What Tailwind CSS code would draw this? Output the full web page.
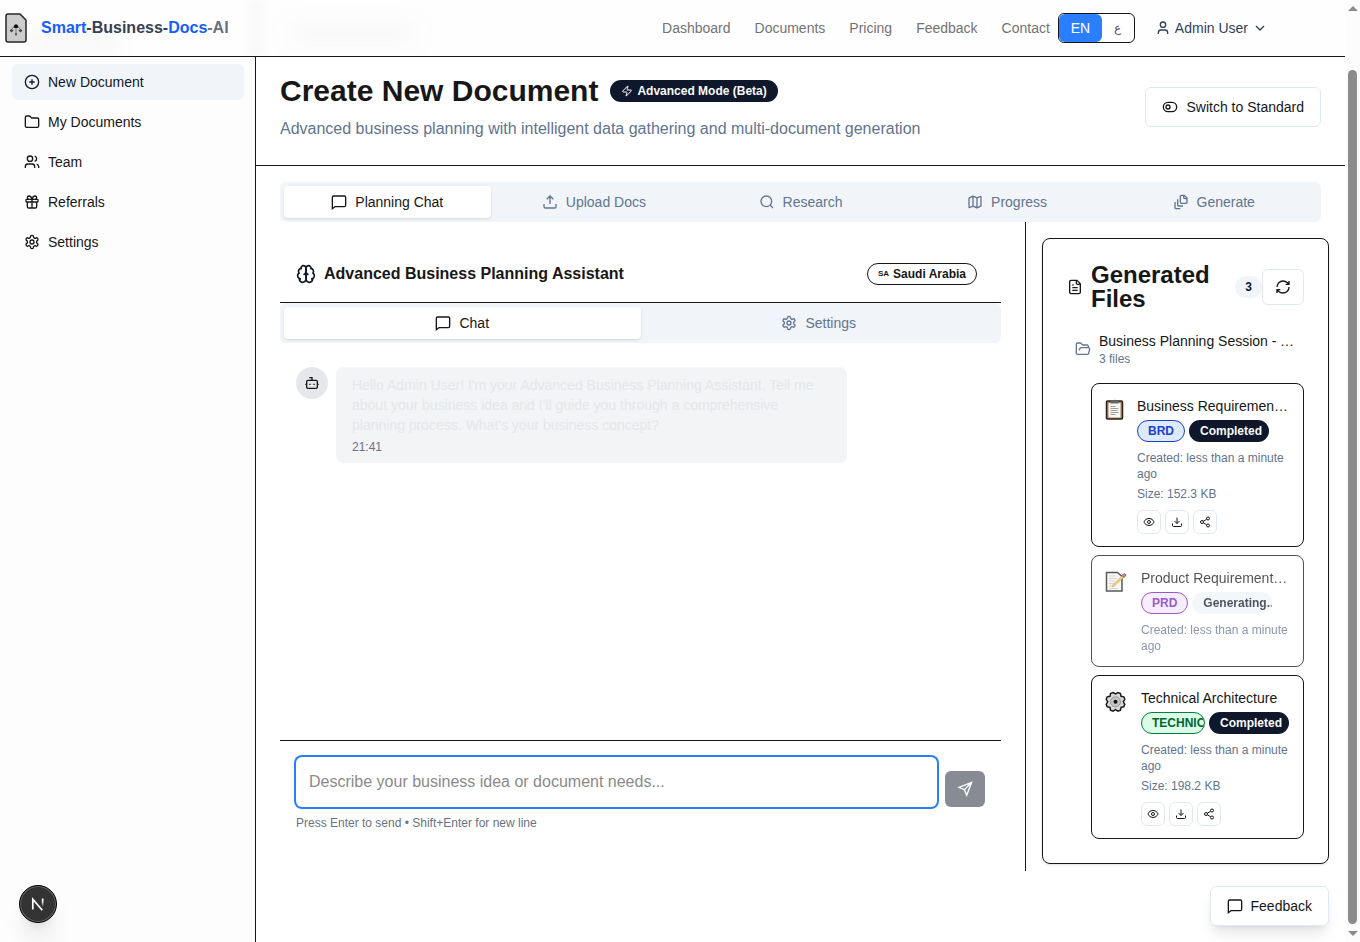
<!DOCTYPE html>
<html lang="en">
<head>
<meta charset="utf-8">
<meta name="viewport" content="width=device-width, initial-scale=1">
<title>Smart-Business-Docs-AI</title>
<script src="https://cdn.jsdelivr.net/npm/@tailwindcss/browser@4"></script>
</head>
<body class="flex h-screen overflow-hidden bg-white font-['Liberation_Sans',Arial,sans-serif] text-sm text-neutral-900">

<svg class="hidden" aria-hidden="true">
  <symbol id="plus" viewBox="0 0 24 24"><circle cx="12" cy="12" r="10"/><path d="M8 12h8M12 8v8"/></symbol>
  <symbol id="folder" viewBox="0 0 24 24"><path d="M20 20a2 2 0 0 0 2-2V8a2 2 0 0 0-2-2h-7.9a2 2 0 0 1-1.69-.9L9.6 3.9A2 2 0 0 0 7.93 3H4a2 2 0 0 0-2 2v13a2 2 0 0 0 2 2Z"/></symbol>
  <symbol id="folder-open" viewBox="0 0 24 24"><path d="m6 14 1.5-2.9A2 2 0 0 1 9.24 10H20a2 2 0 0 1 1.94 2.5l-1.54 6a2 2 0 0 1-1.95 1.5H4a2 2 0 0 1-2-2V5a2 2 0 0 1 2-2h3.9a2 2 0 0 1 1.69.9l.81 1.2a2 2 0 0 0 1.67.9H18a2 2 0 0 1 2 2v2"/></symbol>
  <symbol id="users" viewBox="0 0 24 24"><path d="M16 21v-2a4 4 0 0 0-4-4H6a4 4 0 0 0-4 4v2"/><circle cx="9" cy="7" r="4"/><path d="M22 21v-2a4 4 0 0 0-3-3.870M16 3.130a4 4 0 0 1 0 7.750"/></symbol>
  <symbol id="gift" viewBox="0 0 24 24"><rect x="3" y="8" width="18" height="4" rx="1"/><path d="M12 8v13M19 12v7a2 2 0 0 1-2 2H7a2 2 0 0 1-2-2v-7M7.5 8a2.5 2.5 0 0 1 0-5A4.8 8 0 0 1 12 8a4.8 8 0 0 1 4.500-5 2.500 2.500 0 0 1 0 5"/></symbol>
  <symbol id="gear" viewBox="0 0 24 24"><path d="M12.220 2h-.44a2 2 0 0 0-2 2v.18a2 2 0 0 1-1 1.730l-.43.25a2 2 0 0 1-2 0l-.15-.08a2 2 0 0 0-2.730.73l-.22.38a2 2 0 0 0 .73 2.730l.15.1a2 2 0 0 1 1 1.720v.51a2 2 0 0 1-1 1.740l-.15.09a2 2 0 0 0-.73 2.730l.22.38a2 2 0 0 0 2.730.73l.15-.08a2 2 0 0 1 2 0l.43.25a2 2 0 0 1 1 1.730V20a2 2 0 0 0 2 2h.44a2 2 0 0 0 2-2v-.18a2 2 0 0 1 1-1.730l.43-.25a2 2 0 0 1 2 0l.15.08a2 2 0 0 0 2.730-.73l.22-.39a2 2 0 0 0-.73-2.730l-.15-.08a2 2 0 0 1-1-1.740v-.5a2 2 0 0 1 1-1.740l.15-.09a2 2 0 0 0 .73-2.730l-.22-.38a2 2 0 0 0-2.730-.73l-.15.08a2 2 0 0 1-2 0l-.43-.25a2 2 0 0 1-1-1.730V4a2 2 0 0 0-2-2z"/><circle cx="12" cy="12" r="3"/></symbol>
  <symbol id="user" viewBox="0 0 24 24"><path d="M19 21v-2a4 4 0 0 0-4-4H9a4 4 0 0 0-4 4v2"/><circle cx="12" cy="7" r="4"/></symbol>
  <symbol id="chevron" viewBox="0 0 24 24"><path d="m6 9 6 6 6-6"/></symbol>
  <symbol id="zap" viewBox="0 0 24 24"><path d="M4 14a1 1 0 0 1-.78-1.630l9.900-10.200a.5.5 0 0 1 .86.46l-1.920 6.020A1 1 0 0 0 13 10h7a1 1 0 0 1 .78 1.630l-9.900 10.200a.5.5 0 0 1-.86-.46l1.920-6.020A1 1 0 0 0 11 14z"/></symbol>
  <symbol id="toggle" viewBox="0 0 24 24"><rect x="2" y="5" width="20" height="14" rx="7"/><circle cx="9" cy="12" r="3"/></symbol>
  <symbol id="bubble" viewBox="0 0 24 24"><path d="M22 17a2 2 0 0 1-2 2H6l-4 3V5a2 2 0 0 1 2-2h16a2 2 0 0 1 2 2z"/></symbol>
  <symbol id="upload" viewBox="0 0 24 24"><path d="M12 3v12M7 8l5-5 5 5M21 15v4a2 2 0 0 1-2 2H5a2 2 0 0 1-2-2v-4"/></symbol>
  <symbol id="download" viewBox="0 0 24 24"><path d="M12 3v12M7 10l5 5 5-5M21 15v4a2 2 0 0 1-2 2H5a2 2 0 0 1-2-2v-4"/></symbol>
  <symbol id="search" viewBox="0 0 24 24"><circle cx="11" cy="11" r="8"/><path d="m21 21-4.340-4.340"/></symbol>
  <symbol id="map" viewBox="0 0 24 24"><path d="M14.106 5.553a2 2 0 0 0 1.788 0l3.659-1.830A1 1 0 0 1 21 4.619v12.764a1 1 0 0 1-.553.894l-4.553 2.277a2 2 0 0 1-1.788 0l-4.212-2.106a2 2 0 0 0-1.788 0l-3.659 1.830A1 1 0 0 1 3 19.381V6.618a1 1 0 0 1 .553-.894l4.553-2.277a2 2 0 0 1 1.788 0zM15 5.764v15M9 3.236v15"/></symbol>
  <symbol id="files" viewBox="0 0 24 24"><path d="M21 7h-3a2 2 0 0 1-2-2V2M21 6v6.500c0 .8-.7 1.500-1.500 1.500h-7c-.8 0-1.500-.7-1.500-1.500v-9c0-.8.7-1.500 1.500-1.500H17ZM7 8v8.800c0 .3.2.6.4.8.2.2.5.4.8.4H15M3 12v8.800c0 .3.2.6.4.8.2.2.5.4.8.4H11"/></symbol>
  <symbol id="brain" viewBox="0 0 24 24"><path d="M12 5a3 3 0 1 0-5.997.125 4 4 0 0 0-2.526 5.770 4 4 0 0 0 .556 6.588A4 4 0 1 0 12 18Z"/><path d="M12 5a3 3 0 1 1 5.997.125 4 4 0 0 1 2.526 5.770 4 4 0 0 1-.556 6.588A4 4 0 1 1 12 18Z"/><path d="M15 13a4.500 4.500 0 0 1-3-4 4.500 4.500 0 0 1-3 4M17.599 6.500a3 3 0 0 0 .399-1.375M6.003 5.125A3 3 0 0 0 6.401 6.500M3.477 10.896a4 4 0 0 1 .585-.396M19.938 10.500a4 4 0 0 1 .585.396M6 18a4 4 0 0 1-1.967-.516M19.967 17.484A4 4 0 0 1 18 18"/></symbol>
  <symbol id="bot" viewBox="0 0 24 24"><path d="M12 8V4H8"/><rect x="4" y="8" width="16" height="12" rx="2"/><path d="M2 14h2M20 14h2M15 13v2M9 13v2"/></symbol>
  <symbol id="send" viewBox="0 0 24 24"><path d="M3 9.500 22 2l-7.500 19.500-3.500-8.500zM22 2 11 13"/></symbol>
  <symbol id="file" viewBox="0 0 24 24"><path d="M15 2H6a2 2 0 0 0-2 2v16a2 2 0 0 0 2 2h12a2 2 0 0 0 2-2V7zM14 2v4a2 2 0 0 0 2 2h4M10 9H8M16 13H8M16 17H8"/></symbol>
  <symbol id="refresh" viewBox="0 0 24 24"><path d="M3 12a9 9 0 0 1 9-9 9.750 9.750 0 0 1 6.740 2.740L21 8M21 3v5h-5M21 12a9 9 0 0 1-9 9 9.750 9.750 0 0 1-6.740-2.740L3 16M8 16H3v5"/></symbol>
  <symbol id="eye" viewBox="0 0 24 24"><path d="M2 12.300a1 1 0 0 1 0-.7 10.750 10.750 0 0 1 20 0 1 1 0 0 1 0 .7 10.750 10.750 0 0 1-20 0"/><circle cx="12" cy="12" r="3"/></symbol>
  <symbol id="share" viewBox="0 0 24 24"><circle cx="18" cy="5" r="3"/><circle cx="6" cy="12" r="3"/><circle cx="18" cy="19" r="3"/><path d="m8.600 13.500 6.800 4M15.400 6.500l-6.800 4"/></symbol>
</svg>

<div class="relative flex min-w-0 flex-1 flex-col">
  <header class="relative flex shrink-0 items-center border-b border-neutral-900 bg-[#fefefe] pr-[77px] pl-1">
    <div class="absolute inset-0 overflow-hidden" aria-hidden="true">
      <div class="absolute top-9 left-6 h-4 w-24 bg-black/4 blur-md"></div>
      <div class="absolute top-7 left-72 h-3 w-32 bg-slate-500/8 blur-md"></div>
      <div class="absolute top-0 left-62 h-14 w-4 bg-black/2 blur-xs"></div>
    </div>
    <a href="#" class="relative flex items-center gap-[13px] text-base font-bold">
      <svg class="h-8 w-6" viewBox="0 0 24 32" aria-hidden="true">
        <path d="M4 2h12l6 6v20a2 2 0 0 1-2 2H4a2 2 0 0 1-2-2V4a2 2 0 0 1 2-2z" fill="#cdcdcd" stroke="#262626" stroke-width="1.500"/>
        <path d="M12 14v9M7.500 19c0-3 2-4 4.500-4s4.500 1 4.500 4" fill="none" stroke="#777"/>
        <path d="m12 12 2.500 2-1 2h-3l-1-2z" fill="#111"/><path d="m5.500 18.500 2-1.500 2 1.500-2 2zM14.500 18.500l2-1.500 2 1.500-2 2zM10.500 21.500h3L12 24z" fill="#444"/>
      </svg>
      <span><span class="text-blue-600">Smart</span><span class="text-gray-700">-Business-</span><span class="text-blue-600">Docs</span><span class="text-gray-500">-AI</span></span>
    </a>
    <nav class="relative ml-auto flex gap-6 text-neutral-500">
      <a href="#">Dashboard</a><a href="#">Documents</a><a href="#">Pricing</a><a href="#">Feedback</a><a href="#">Contact</a>
    </nav>
    <div class="relative my-[13px] ml-2 flex h-[30px] overflow-hidden rounded-md border border-neutral-900 bg-white">
      <button class="w-[43px] rounded-md bg-[#2b7fff] font-medium text-white">EN</button>
      <button class="w-8 text-xs text-gray-600" aria-label="Arabic">ع</button>
    </div>
    <button class="relative ml-5 flex items-center gap-1 text-slate-700">
      <svg class="size-4 fill-none stroke-current stroke-2"><use href="#user"/></svg>Admin User<svg class="size-4 fill-none stroke-current stroke-2"><use href="#chevron"/></svg>
    </button>
  </header>

  <div class="flex min-h-0 flex-1">
    <aside class="w-64 shrink-0 border-r border-neutral-900 bg-[#fdfdfd] py-[7px] pr-[11px] pl-3">
      <nav class="flex flex-col gap-1">
        <a href="#" class="flex h-9 items-center gap-2 rounded-md bg-slate-100 px-3 text-slate-900"><svg class="size-4 fill-none stroke-current stroke-2"><use href="#plus"/></svg>New Document</a>
        <a href="#" class="flex h-9 items-center gap-2 px-3"><svg class="size-4 fill-none stroke-current stroke-2"><use href="#folder"/></svg>My Documents</a>
        <a href="#" class="flex h-9 items-center gap-2 px-3"><svg class="size-4 fill-none stroke-current stroke-2"><use href="#users"/></svg>Team</a>
        <a href="#" class="flex h-9 items-center gap-2 px-3"><svg class="size-4 fill-none stroke-current stroke-2"><use href="#gift"/></svg>Referrals</a>
        <a href="#" class="flex h-9 items-center gap-2 px-3"><svg class="size-4 fill-none stroke-current stroke-2"><use href="#gear"/></svg>Settings</a>
      </nav>
    </aside>

    <main class="flex min-w-0 flex-1 flex-col">
      <div class="flex items-center justify-between border-b border-neutral-900 pt-4 pr-6 pb-6 pl-6">
        <div>
          <div class="flex items-center gap-3">
            <h1 class="text-3xl font-bold">Create New Document</h1>
            <span class="flex items-center gap-1 rounded-full bg-slate-900 px-[11px] py-[3px] text-xs font-semibold text-slate-50"><svg class="size-3 fill-none stroke-current stroke-2"><use href="#zap"/></svg>Advanced Mode (Beta)</span>
          </div>
          <p class="mt-2 text-base text-slate-500">Advanced business planning with intelligent data gathering and multi-document generation</p>
        </div>
        <button class="flex h-10 items-center gap-2 rounded-md border border-slate-200 bg-white px-4"><svg class="size-4 fill-none stroke-current stroke-2"><use href="#toggle"/></svg>Switch to Standard</button>
      </div>

      <div class="mt-4 mr-6 ml-6 grid h-10 grid-cols-5 rounded-md bg-slate-100 p-1 text-slate-500" role="tablist">
        <button role="tab" aria-selected="true" class="flex items-center justify-center gap-2 rounded-sm bg-white text-neutral-900 shadow-sm"><svg class="size-4 fill-none stroke-current stroke-2"><use href="#bubble"/></svg>Planning Chat</button>
        <button role="tab" class="flex items-center justify-center gap-2"><svg class="size-4 fill-none stroke-current stroke-2"><use href="#upload"/></svg>Upload Docs</button>
        <button role="tab" class="flex items-center justify-center gap-2"><svg class="size-4 fill-none stroke-current stroke-2"><use href="#search"/></svg>Research</button>
        <button role="tab" class="flex items-center justify-center gap-2"><svg class="size-4 fill-none stroke-current stroke-2"><use href="#map"/></svg>Progress</button>
        <button role="tab" class="flex items-center justify-center gap-2"><svg class="size-4 fill-none stroke-current stroke-2"><use href="#files"/></svg>Generate</button>
      </div>

      <div class="flex">
        <section class="flex min-w-0 flex-1 flex-col px-6 pb-6">
          <div class="flex items-center justify-between border-b border-neutral-900 pt-10 pr-6 pb-4 pl-4">
            <h2 class="flex items-center gap-2 text-base font-semibold"><svg class="size-5 fill-none stroke-slate-900 stroke-2"><use href="#brain"/></svg>Advanced Business Planning Assistant</h2>
            <span class="flex h-[22px] items-center gap-1 rounded-full border border-neutral-900 px-2.5 text-xs font-semibold"><span class="text-[8px]">SA</span>Saudi Arabia</span>
          </div>
          <div class="grid h-10 grid-cols-2 rounded-md bg-slate-100 p-1 text-slate-500" role="tablist">
            <button role="tab" aria-selected="true" class="flex items-center justify-center gap-2 rounded-sm bg-white text-neutral-900 shadow-sm"><svg class="size-4 fill-none stroke-current stroke-2"><use href="#bubble"/></svg>Chat</button>
            <button role="tab" class="flex items-center justify-center gap-2"><svg class="size-4 fill-none stroke-current stroke-2"><use href="#gear"/></svg>Settings</button>
          </div>
          <div class="flex flex-1 items-start gap-2 px-4 pt-6">
            <span class="flex size-8 shrink-0 items-center justify-center rounded-full bg-gray-200"><svg class="size-4 fill-none stroke-current stroke-2"><use href="#bot"/></svg></span>
            <div class="max-w-[511px] rounded-lg bg-gray-100 px-4 py-2">
              <p class="text-gray-200">Hello Admin User! I'm your Advanced Business Planning Assistant. Tell me about your business idea and I'll guide you through a comprehensive planning process. What's your business concept?</p>
              <time class="mt-1 block text-xs text-gray-500">21:41</time>
            </div>
          </div>
          <div class="border-t border-neutral-900 p-4">
            <div class="flex items-end gap-2">
              <textarea rows="1" aria-label="Message" placeholder="Describe your business idea or document needs..." class="block h-[50px] min-w-0 flex-1 resize-none rounded-md bg-white px-[13px] pt-[13px] text-base ring-2 ring-[#2b7fff] outline-none placeholder:text-[#8a8a8a]"></textarea>
              <button aria-label="Send" class="flex h-9 w-10 items-center justify-center rounded-md bg-[#878b93] text-white"><svg class="size-4 fill-none stroke-current stroke-2"><use href="#send"/></svg></button>
            </div>
            <p class="mt-2 text-xs text-gray-500">Press Enter to send • Shift+Enter for new line</p>
          </div>
        </section>

        <aside class="w-80 shrink-0 border-l border-neutral-900 px-4 pt-4 pb-[7px]">
          <div class="rounded-lg border border-neutral-900 p-6 shadow-sm">
            <div class="flex items-center">
              <svg class="mr-2 size-4 shrink-0 fill-none stroke-current stroke-2"><use href="#file"/></svg>
              <h2 class="flex-1 text-2xl/6 font-semibold">Generated Files</h2>
              <span class="rounded-full bg-slate-100 px-2.5 py-[3px] text-xs font-semibold text-slate-900">3</span>
              <button aria-label="Refresh" class="flex h-9 w-[42px] items-center justify-center rounded-md border border-slate-200"><svg class="size-4 fill-none stroke-current stroke-2"><use href="#refresh"/></svg></button>
            </div>
            <div class="mt-3 flex items-center gap-2 p-2">
              <svg class="size-4 shrink-0 fill-none stroke-slate-500 stroke-2"><use href="#folder-open"/></svg>
              <div class="min-w-0"><p class="truncate">Business Planning Session - Today</p><p class="text-xs text-slate-500">3 files</p></div>
            </div>
            <div class="mt-2 ml-6 flex flex-col gap-2">
              <article class="flex gap-2 rounded-lg border border-neutral-900 p-3">
                <svg class="mt-0.5 h-6 w-[25px] shrink-0" viewBox="0 0 25 24" aria-hidden="true"><rect x="2.500" y="3" width="16" height="18" rx="1" fill="#b97f50" stroke="#27231f" stroke-width="1.500"/><path d="M4.500 5h12v14.500h-12z" fill="#f7f7f7"/><path d="M6.500 5.500V3h2.500l1.500-1.500L12 3h2.500v2.500z" fill="#666"/><path d="M6.500 8.500h5M6.500 10.500h8M6.500 12.500h7M6.500 14.500h8M6.500 16.500h5" stroke="#888" stroke-width=".8"/></svg>
                <div class="min-w-0 flex-1">
                  <h3 class="truncate">Business Requirements Document</h3>
                  <div class="mt-1 flex gap-1 text-xs font-semibold"><span class="rounded-full border border-[#1d40c8] bg-blue-100 px-2.5 py-0.5 text-[#1d40c8]">BRD</span><span class="w-20 overflow-hidden rounded-full bg-slate-900 py-[3px] pl-[11px] text-slate-50">Completed</span></div>
                  <p class="mt-2 text-xs text-slate-500">Created: less than a minute ago</p>
                  <p class="mt-1 text-xs text-slate-500">Size: 152.3 KB</p>
                  <div class="mt-2 flex gap-1">
                    <button aria-label="View" class="flex size-6 items-center justify-center rounded-md border border-slate-200"><svg class="size-3 fill-none stroke-current stroke-2"><use href="#eye"/></svg></button>
                    <button aria-label="Download" class="flex size-6 items-center justify-center rounded-md border border-slate-200"><svg class="size-3 fill-none stroke-current stroke-2"><use href="#download"/></svg></button>
                    <button aria-label="Share" class="flex size-6 items-center justify-center rounded-md border border-slate-200"><svg class="size-3 fill-none stroke-current stroke-2"><use href="#share"/></svg></button>
                  </div>
                </div>
              </article>
              <article class="flex gap-2 rounded-lg border border-neutral-900 p-3 opacity-75">
                <svg class="mt-0.5 h-6 w-[29px] shrink-0" viewBox="0 0 29 24" aria-hidden="true"><path d="M2.500 2.500h11l4.500 4v14.500H2.500z" fill="#f4f4f4" stroke="#222" stroke-width="1.500"/><path d="M5 6h7M5 8.500h8M5 11h6M5 13.500h5M5 16h4M5 18.500h9" stroke="#bbb" stroke-width=".8"/><path d="m8 17 1-2.500 9.500-9 1.500 1.500-9.500 9z" fill="#f5b83d" stroke="#a87828" stroke-width=".4"/><path d="m18 5.500 2-2 2 1.500-2 2.500z" fill="#c66" stroke="#333" stroke-width=".9"/></svg>
                <div class="min-w-0 flex-1">
                  <h3 class="truncate">Product Requirements Document</h3>
                  <div class="mt-1 flex gap-1 text-xs font-semibold"><span class="rounded-full border border-[#7a22b8] bg-purple-100 px-2.5 py-0.5 text-[#7a22b8]">PRD</span><span class="w-20 overflow-hidden rounded-full bg-slate-100 py-[3px] pl-[11px] text-slate-900">Generating...</span></div>
                  <p class="mt-2 text-xs text-slate-500">Created: less than a minute ago</p>
                </div>
              </article>
              <article class="flex gap-2 rounded-lg border border-neutral-900 p-3">
                <svg class="mt-0.5 h-6 w-[29px] shrink-0" viewBox="0 0 29 24" aria-hidden="true"><path d="m9 2.500 2.500 1.500L14 2.500l2.500 1 .5 2.800 2.800.5 1 2.500-1.500 2.500 1.500 2.500-1 2.500-2.800.5-.5 2.800-2.500 1-2.500-1.500-2.500 1.500-2.500-1-.5-2.800-2.800-.5-1-2.500 1.500-2.500-1.500-2.500 1-2.500 2.800-.5.5-2.800z" fill="#d8d8d8" stroke="#1c1c1c" stroke-width="1.500"/><circle cx="11.500" cy="11.800" r="5" fill="#c4c4c4" stroke="#8a8a8a" stroke-width=".8"/><circle cx="11.500" cy="11.800" r="2" fill="#111"/></svg>
                <div class="min-w-0 flex-1">
                  <h3 class="truncate">Technical Architecture</h3>
                  <div class="mt-1 flex gap-1 text-xs font-semibold"><span class="w-16 overflow-hidden rounded-full border border-green-700 bg-green-100 py-0.5 pl-2.5 text-green-800">TECHNICAL</span><span class="w-20 overflow-hidden rounded-full bg-slate-900 py-[3px] pl-[11px] text-slate-50">Completed</span></div>
                  <p class="mt-2 text-xs text-slate-500">Created: less than a minute ago</p>
                  <p class="mt-1 text-xs text-slate-500">Size: 198.2 KB</p>
                  <div class="mt-2 flex gap-1">
                    <button aria-label="View" class="flex size-6 items-center justify-center rounded-md border border-slate-200"><svg class="size-3 fill-none stroke-current stroke-2"><use href="#eye"/></svg></button>
                    <button aria-label="Download" class="flex size-6 items-center justify-center rounded-md border border-slate-200"><svg class="size-3 fill-none stroke-current stroke-2"><use href="#download"/></svg></button>
                    <button aria-label="Share" class="flex size-6 items-center justify-center rounded-md border border-slate-200"><svg class="size-3 fill-none stroke-current stroke-2"><use href="#share"/></svg></button>
                  </div>
                </div>
              </article>
            </div>
          </div>
        </aside>
      </div>
    </main>
  </div>

  <!-- Floating controls -->
  <button class="absolute right-4 bottom-4 flex h-10 items-center gap-2 rounded-md border border-slate-200 bg-white px-4 shadow-lg"><svg class="size-4 fill-none stroke-current stroke-2"><use href="#bubble"/></svg>Feedback</button>
  <button aria-label="Open developer tools" class="absolute bottom-[19px] left-[19px] flex size-[38px] items-center justify-center rounded-full border border-black bg-[#333] shadow-xl ring-1 ring-[#666] ring-inset">
    <svg class="size-4" viewBox="0 0 16 16" fill="none" aria-hidden="true"><defs><linearGradient id="fade" x1="0" y1="0" x2="0" y2="1"><stop offset=".3" stop-color="#fff"/><stop offset="1" stop-color="#fff" stop-opacity="0"/></linearGradient></defs><path d="M2.800 13.500V3.300l9.500 11" stroke="#fff" stroke-width="1.700"/><path d="M11.800 2.500h1.700v8.500h-1.700z" fill="url(#fade)"/></svg>
  </button>
</div>

<!-- Scroll track -->
<div class="flex w-[15px] shrink-0 flex-col items-center justify-between bg-[#fcfcfc] py-[6px]" aria-hidden="true">
  <svg class="h-[5px] w-2.5" viewBox="0 0 10 5"><path d="M0 5 5 0l5 5z" fill="#8b8b8b"/></svg>
  <div class="mt-[59px] mb-[7px] w-[9px] flex-1 rounded-full bg-[#8b8b8b]"></div>
  <svg class="h-[5px] w-2.5" viewBox="0 0 10 5"><path d="m0 0 5 5 5-5z" fill="#8b8b8b"/></svg>
</div>
</body>
</html>
